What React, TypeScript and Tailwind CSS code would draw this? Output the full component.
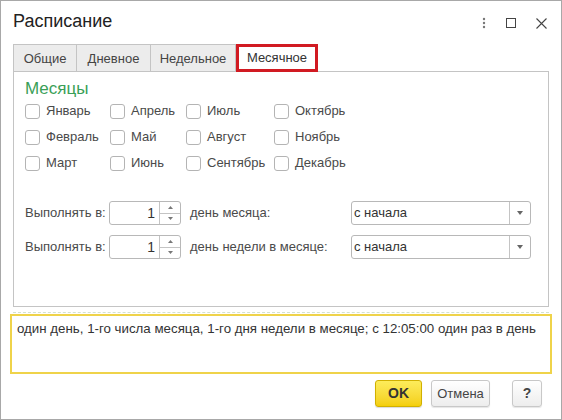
import { useState } from 'react';

const months = [
  ['Январь', 'Апрель', 'Июль', 'Октябрь'],
  ['Февраль', 'Май', 'Август', 'Ноябрь'],
  ['Март', 'Июнь', 'Сентябрь', 'Декабрь'],
];

const tabs = ['Общие', 'Дневное', 'Недельное', 'Месячное'];
const tabWidths = ['w-[64px]', 'w-[74px]', 'w-[85px]', 'w-[82px]'];

function Checkbox({ label }: { label: string }) {
  const [checked, setChecked] = useState(false);
  return (
    <label className="flex items-center gap-[6px] h-[26px] cursor-pointer">
      <span
        onClick={() => setChecked(!checked)}
        className="w-[15px] h-[15px] rounded-[3px] border border-[#b4b4b4] bg-white flex items-center justify-center text-[11px] leading-none"
      >
        {checked ? '✓' : ''}
      </span>
      <span className="text-[13px] text-[#4a4a4a]">{label}</span>
    </label>
  );
}

function Spinner({ value }: { value: number }) {
  return (
    <div className="w-[72px] h-[24px] rounded-[3px] border border-[#b8b8b8] flex bg-white">
      <div className="flex-1 text-right pr-[4px] text-[14px] leading-[22px] text-[#333]">{value}</div>
      <div className="w-[21px] border-l border-[#c4c4c4] flex flex-col">
        <div className="flex-1 flex items-center justify-center border-b border-[#c4c4c4]">
          <svg width="5" height="3" viewBox="0 0 5 3"><path d="M2.5 0 L5 3 L0 3Z" fill="#777" /></svg>
        </div>
        <div className="flex-1 flex items-center justify-center">
          <svg width="5" height="3" viewBox="0 0 5 3"><path d="M0 0 L5 0 L2.5 3Z" fill="#777" /></svg>
        </div>
      </div>
    </div>
  );
}

function Select({ value }: { value: string }) {
  return (
    <div className="w-[180px] h-[24px] rounded-[3px] border border-[#b8b8b8] flex bg-white">
      <div className="flex-1 pl-[2px] text-[13px] leading-[22px] text-[#333]">{value}</div>
      <div className="w-[21px] border-l border-[#c4c4c4] flex items-center justify-center">
        <svg width="6" height="4" viewBox="0 0 6 4"><path d="M0 0 L6 0 L3 4Z" fill="#666" /></svg>
      </div>
    </div>
  );
}

export default function App() {
  return (
    <div
      className="w-[562px] h-[420px] border border-[#a8a8a8] bg-white flex flex-col text-[#333]"
      style={{ fontFamily: '"Liberation Sans", Arial, sans-serif' }}
    >
      {/* Title bar */}
      <div className="h-[43px] flex items-start justify-between pl-[12px] pr-[14px] pt-[8px]">
        <div className="text-[18px] leading-[24px] text-[#222]">Расписание</div>
        <div className="flex items-center gap-[20px] pt-[8px] text-[#555]">
          <svg width="4" height="12" viewBox="0 0 4 12">
            <circle cx="2" cy="2" r="1.2" fill="#777" />
            <circle cx="2" cy="6" r="1.2" fill="#777" />
            <circle cx="2" cy="10" r="1.2" fill="#777" />
          </svg>
          <svg width="10" height="10" viewBox="0 0 10 10"><rect x="0.5" y="0.5" width="9" height="9" fill="none" stroke="#444" /></svg>
          <svg width="11" height="11" viewBox="0 0 11 11"><path d="M0.5 0.5 L10.5 10.5 M10.5 0.5 L0.5 10.5" stroke="#444" strokeWidth="1.1" /></svg>
        </div>
      </div>

      {/* Tabs */}
      <div className="flex pl-[12px] h-[28px]">
        {tabs.map((t, i) =>
          i === 3 ? (
            <div
              key={t}
              className={`${tabWidths[i]} h-[28px] border-[3px] border-[#d11a22] bg-white text-[13px] text-[#333] flex items-center justify-center relative z-10`}
            >
              {t}
            </div>
          ) : (
            <div
              key={t}
              className={`${tabWidths[i]} h-[28px] border border-[#c4c4c4] ${i > 0 ? 'border-l-0' : ''} border-b-0 bg-[#ececec] text-[13px] text-[#444] flex items-center justify-center`}
            >
              {t}
            </div>
          )
        )}
      </div>

      {/* Panel */}
      <div className="mx-[12px] -mt-[1px] h-[236px] border border-[#c4c4c4] pl-[11px] pt-[7px]">
        <div className="text-[17px] leading-[20px] text-[#3a9f58]">Месяцы</div>
        <div className="-mt-[1px] grid grid-cols-[85px_76px_88px_auto]">
          {months.map(row => row.map(m => <Checkbox key={m} label={m} />))}
        </div>

        <div className="mt-[25px] flex flex-col gap-[10px]">
          <div className="flex items-center">
            <span className="w-[84px] text-[13px] text-[#4a4a4a]">Выполнять в:</span>
            <Spinner value={1} />
            <span className="ml-[9px] w-[161px] text-[13px] text-[#4a4a4a]">день месяца:</span>
            <Select value="с начала" />
          </div>
          <div className="flex items-center">
            <span className="w-[84px] text-[13px] text-[#4a4a4a]">Выполнять в:</span>
            <Spinner value={1} />
            <span className="ml-[9px] w-[161px] text-[13px] text-[#4a4a4a]">день недели в месяце:</span>
            <Select value="с начала" />
          </div>
        </div>
      </div>

      {/* dotted separator */}
      <div className="mx-[12px] mt-[5px] border-t border-dashed border-[#d4e2cc]" />

      {/* Description box */}
      <div className="mx-[9px] mt-[1px] h-[60px] border-2 border-[#efd34a] px-[5px] pt-[3px] text-[13.3px] text-[#333]">
        один день, 1-го числа месяца, 1-го дня недели в месяце; с 12:05:00 один раз в день
      </div>

      {/* Buttons */}
      <div className="flex justify-end gap-[9px] pr-[19px] mt-[6px]">
        <button className="w-[47px] h-[27px] rounded-[3px] border border-[#d1b000] bg-gradient-to-b from-[#fdec5a] to-[#f4cf06] text-[14px] font-bold text-[#333] shadow-[0_1px_1px_rgba(0,0,0,0.15)]">
          OK
        </button>
        <button className="w-[59px] h-[27px] rounded-[3px] border border-[#c8c8c8] bg-gradient-to-b from-white to-[#ededed] text-[13px] text-[#444] shadow-[0_1px_1px_rgba(0,0,0,0.1)]">
          Отмена
        </button>
        <button className="ml-[13px] w-[30px] h-[27px] rounded-[3px] border border-[#c8c8c8] bg-gradient-to-b from-white to-[#ededed] text-[14px] font-bold text-[#444] shadow-[0_1px_1px_rgba(0,0,0,0.1)]">
          ?
        </button>
      </div>
    </div>
  );
}
